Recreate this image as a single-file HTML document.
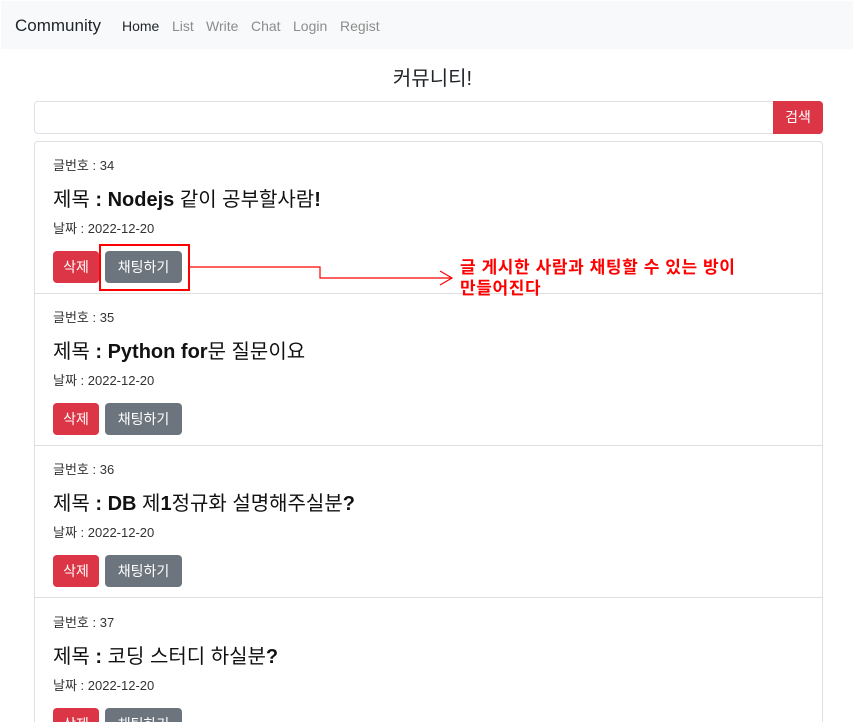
<!DOCTYPE html>
<html><head><meta charset="utf-8"><style>
*{box-sizing:border-box;margin:0;padding:0}
html,body{width:855px;height:722px;overflow:hidden}
body{background:#fff;font-family:"Liberation Sans","Noto Sans CJK KR",sans-serif;color:#212529;position:relative}
.nav{position:absolute;left:1px;top:1px;width:852px;height:48px;background:#f8f9fa}
.brand{position:absolute;left:14px;top:15px;font-size:17px;color:#212529}
.l{position:absolute;top:17px;font-size:14px;color:#8c8c8c}
h1{position:absolute;left:0;width:865px;text-align:center;top:62px;font-size:20px;font-weight:400}
.search{position:absolute;left:34px;top:101px;width:740px;height:33px;border:1px solid #dee2e6;border-radius:4px 0 0 4px}
.sbtn{position:absolute;left:773px;top:101px;width:50px;height:33px;background:#dc3545;color:#fff;border-radius:0 4px 4px 0;font-size:14px;text-align:center;line-height:33px}
.list{position:absolute;left:34px;top:141px;width:789px;height:581px;border:1px solid #dfdfdf;border-bottom:none;border-radius:4px 4px 0 0;overflow:hidden}
.item{position:absolute;left:0;width:787px;height:152px;border-bottom:1px solid #dfdfdf}
.no{position:absolute;left:18px;top:13px;font-size:13px;color:#333}
.t{position:absolute;left:18px;top:41px;font-size:20px;color:#111}
.t b{font-weight:600}
.d{position:absolute;left:18px;top:76px;font-size:13px;color:#333}
.b1{position:absolute;left:18px;top:109px;width:46px;height:32px;background:#dc3545;color:#fff;border-radius:4px;font-size:14px;text-align:center;line-height:32px}
.b2{position:absolute;left:70px;top:109px;width:77px;height:32px;background:#6c757d;color:#fff;border-radius:4px;font-size:14px;text-align:center;line-height:32px}
.box{position:absolute;left:99px;top:244px;width:91px;height:47px;border:2px solid #f00}
.ann{position:absolute;left:460px;top:257px;font-size:17px;color:#f00;font-weight:bold;line-height:21px;letter-spacing:0.6px}
</style></head><body>
<div class="nav"><div class="brand">Community</div>
<span class="l" style="left:121px;color:#212529">Home</span><span class="l" style="left:171px">List</span><span class="l" style="left:205px">Write</span><span class="l" style="left:250px">Chat</span><span class="l" style="left:292px">Login</span><span class="l" style="left:339px">Regist</span></div>
<h1>커뮤니티!</h1>
<div class="search"></div><div class="sbtn">검색</div>
<div class="list">
<div class="item" style="top:0"><div class="no">글번호 : 34</div><div class="t">제목 <b>: Nodejs</b> 같이 공부할사람<b>!</b></div><div class="d">날짜 : 2022-12-20</div><div class="b1">삭제</div><div class="b2">채팅하기</div></div>
<div class="item" style="top:152px"><div class="no">글번호 : 35</div><div class="t">제목 <b>: Python for</b>문 질문이요</div><div class="d">날짜 : 2022-12-20</div><div class="b1">삭제</div><div class="b2">채팅하기</div></div>
<div class="item" style="top:304px"><div class="no">글번호 : 36</div><div class="t">제목 <b>: DB</b> 제<b>1</b>정규화 설명해주실분<b>?</b></div><div class="d">날짜 : 2022-12-20</div><div class="b1">삭제</div><div class="b2">채팅하기</div></div>
<div class="item" style="top:457px"><div class="no">글번호 : 37</div><div class="t">제목 <b>:</b> 코딩 스터디 하실분<b>?</b></div><div class="d">날짜 : 2022-12-20</div><div class="b1">삭제</div><div class="b2">채팅하기</div></div>
</div>
<div class="box"></div>
<svg style="position:absolute;left:0;top:0" width="855" height="722"><polyline points="190,267 320,267 320,278 452,278" fill="none" stroke="#f00" stroke-width="1.2"/><polyline points="440,271 452,278 440,285" fill="none" stroke="#f00" stroke-width="1.2"/></svg>
<div class="ann">글 게시한 사람과 채팅할 수 있는 방이<br>만들어진다</div>
</body></html>
